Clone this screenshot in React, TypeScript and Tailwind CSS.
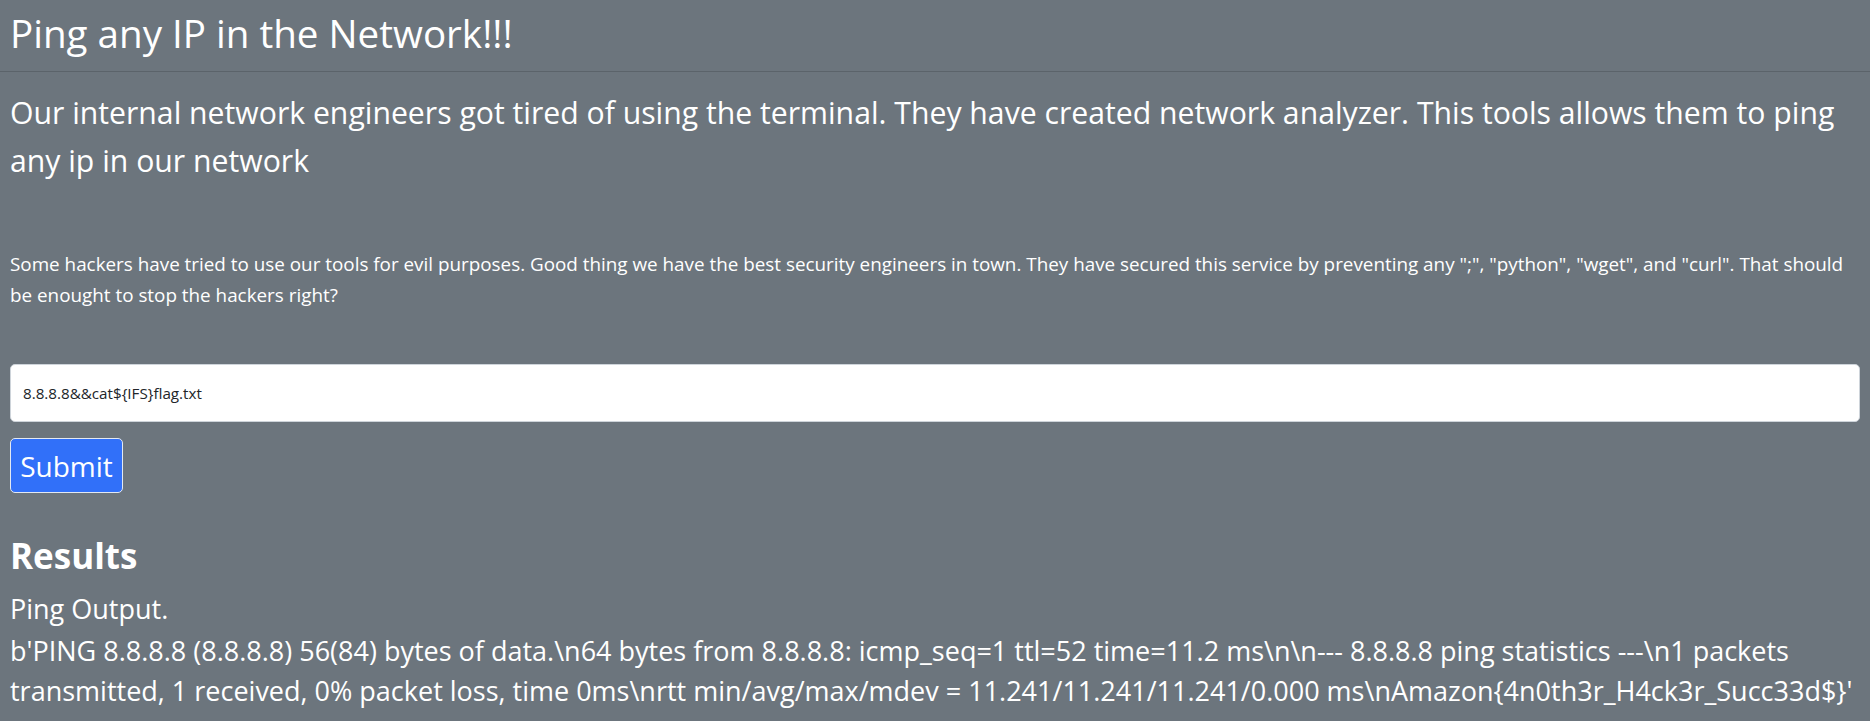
import React from 'react';

const App: React.FC = () => {
  const output =
    "b'PING 8.8.8.8 (8.8.8.8) 56(84) bytes of data.\\n64 bytes from 8.8.8.8: icmp_seq=1 ttl=52 time=11.2 ms\\n\\n--- 8.8.8.8 ping statistics ---\\n1 packets transmitted, 1 received, 0% packet loss, time 0ms\\nrtt min/avg/max/mdev = 11.241/11.241/11.241/0.000 ms\\nAmazon{4n0th3r_H4ck3r_Succ33d$}'";

  return (
    <div className="min-h-screen bg-[#6c757d] text-white font-['Open_Sans',sans-serif]">
      {/* Header */}
      <header className="h-[72px] border-b border-[#5b636a] px-[10px] pt-[10px]">
        <h1 className="text-[38.6px] leading-[46px] font-normal">Ping any IP in the Network!!!</h1>
      </header>

      <main className="px-[10px]">
        <p className="mt-[17px] text-[30.2px] leading-[48px]">
          Our internal network engineers got tired of using the terminal. They have created network analyzer. This tools allows them to ping any ip in our network
        </p>

        <p className="mt-[64px] text-[18.85px] leading-[31px]">
          Some hackers have tried to use our tools for evil purposes. Good thing we have the best security engineers in town. They have secured this service by preventing any ";", "python", "wget", and "curl". That should be enought to stop the hackers right?
        </p>

        <form className="mt-[53px]" onSubmit={(e) => e.preventDefault()}>
          <input
            type="text"
            defaultValue="8.8.8.8&&cat${IFS}flag.txt"
            className="block w-full h-[58px] rounded-[5px] border border-[#ced4da] bg-white px-[12px] text-[15.2px] text-[#212529] outline-none"
          />
          <button
            type="submit"
            className="mt-[16px] h-[55px] w-[113px] rounded-[5px] border border-[#e3e9f3] bg-[#3170f9] text-[28px] text-white"
          >
            Submit
          </button>
        </form>

        <h3 className="mt-[41px] text-[35px] leading-[43px] font-bold">Results</h3>
        <p className="mt-[12px] text-[27px] leading-[40px]">Ping Output.</p>
        <p className="mt-[2px] text-[27px] leading-[40px]">{output}</p>
      </main>
    </div>
  );
};

export default App;
